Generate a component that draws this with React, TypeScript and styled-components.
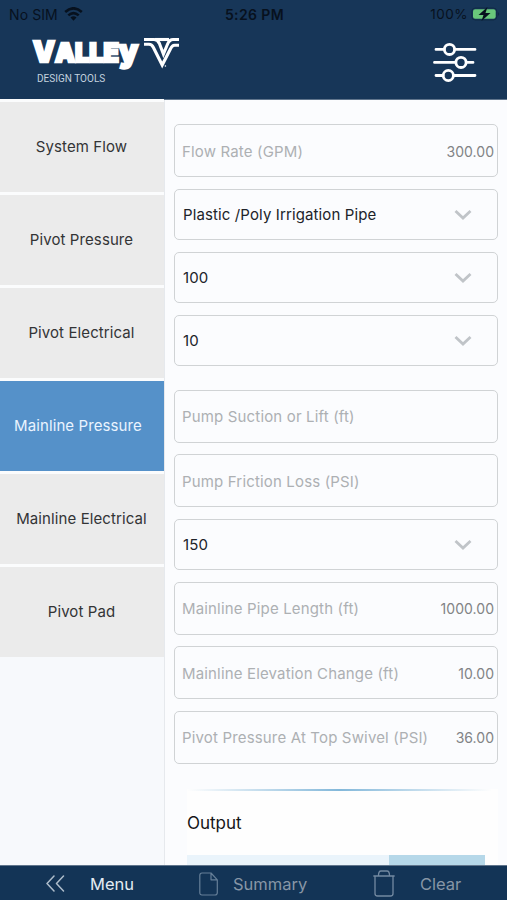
import React from "react";
import styled, { createGlobalStyle } from "styled-components";

const Global = createGlobalStyle`
  * { box-sizing: border-box; }
  body { margin: 0; font-family: Inter, "Liberation Sans", sans-serif; background: #fbfcfe; }
`;

const Screen = styled.div`
  width: 507px;
  height: 900px;
  display: flex;
  flex-direction: column;
  overflow: hidden;
  background: #fbfcfe;
`;

const Header = styled.header`
  height: 100px;
  flex: none;
  background: #173658;
  border-bottom: 1px solid #60758c;
`;

const StatusBar = styled.div`
  height: 28px;
  display: grid;
  grid-template-columns: 1fr auto 1fr;
  align-items: center;
  padding: 0 7px 0 9px;
  font-size: 13px;
  color: #07111e;
`;

const StatusGroup = styled.div<{ $end?: boolean }>`
  display: flex;
  align-items: center;
  justify-content: ${(p) => (p.$end ? "flex-end" : "flex-start")};
  gap: ${(p) => (p.$end ? 3 : 6)}px;
  font-size: ${(p) => (p.$end ? 13.5 : 14)}px;
  letter-spacing: ${(p) => (p.$end ? 0.5 : 0.1)}px;
`;

const Clock = styled.div`
  font-size: 14px;
  font-weight: 600;
  letter-spacing: 0.4px;
`;

const Brand = styled.div`
  display: flex;
  justify-content: space-between;
  padding: 8px 30px 0 31px;
`;

const BrandName = styled.div`
  display: flex;
  flex-direction: column;
`;

const Tagline = styled.div`
  margin: 0 0 0 6px;
  font: 10px/13px Roboto, sans-serif;
  letter-spacing: 0.02px;
  color: #c3d2df;
`;

const SlidersWrap = styled.div`
  padding-top: 6px;
`;

const Body = styled.div`
  flex: 1;
  min-height: 0;
  display: flex;
`;

const Sidebar = styled.nav`
  width: 165px;
  flex: none;
  display: flex;
  flex-direction: column;
  gap: 3px;
  padding: 2px 0 0;
  background: #f7f9fc;
  border-right: 1px solid #e6e9ed;
`;

const Tab = styled.div<{ $active?: boolean }>`
  height: 90px;
  display: flex;
  align-items: center;
  justify-content: center;
  font-size: 15px;
  letter-spacing: 0.1px;
  box-shadow: 0 0 0 3px #fbfcfd;
  clip-path: inset(-3px 0 0 0);
  padding: 0 ${(p) => (p.$active ? 8 : 1)}px 1px 0;
  color: ${(p) => (p.$active ? "#eaf4ff" : "#333436")};
  background: ${(p) => (p.$active ? "#5591c9" : "#ebebeb")};
`;

const Form = styled.main`
  flex: 1;
  padding: 24px 9px 0;
  overflow: hidden;
`;

const Box = styled.div<{ $select?: boolean; $gap?: number }>`
  height: ${(p) => (p.$select ? 51.5 : 53)}px;
  margin-bottom: ${(p) => p.$gap ?? 11.5}px;
  display: flex;
  align-items: center;
  justify-content: space-between;
  padding: 1px ${(p) => (p.$select ? 25 : 3)}px 0 ${(p) => (p.$select ? 8 : 7)}px;
  border: 1.5px solid #d0d3d5;
  border-radius: 5px;
  background: #fbfcfe;
  font-size: 15px;
  letter-spacing: 0.12px;
  color: #202329;
`;

const Placeholder = styled.span`
  letter-spacing: 0.16px;
  color: #adb0b3;
`;

const Value = styled.span`
  font-size: 14px;
  letter-spacing: 0.03px;
  color: #818385;
`;

const Output = styled.section`
  margin: 25px 0 0 13px;
  height: 120px;
  background: #fefefe;
`;

const Divider = styled.div`
  height: 2px;
  margin: 0 6px 0 0;
  background: linear-gradient(90deg, #fefefe, #83b8da 50%, #fefefe);
`;

const OutputTitle = styled.h2`
  height: 64px;
  margin: 0;
  display: flex;
  align-items: center;
  font-size: 17px;
  font-weight: 400;
  color: #151617;
`;

const OutputRow = styled.div`
  width: 298px;
  height: 30px;
  display: grid;
  grid-template-columns: 202px 96px;
`;

const Cell = styled.div<{ $value?: boolean }>`
  background: ${(p) => (p.$value ? "#b6d8e9" : "#eaf4fb")};
`;

const Footer = styled.footer`
  height: 35px;
  flex: none;
  display: grid;
  grid-template-columns: 199px 174px 1fr;
  align-items: center;
  border-top: 1px solid #60758c;
  padding-top: 1px;
  background: #133456;
`;

const Action = styled.div<{ $active?: boolean; $indent?: number; $gap: number }>`
  display: flex;
  align-items: center;
  gap: ${(p) => p.$gap}px;
  padding-left: ${(p) => p.$indent ?? 0}px;
  font-size: 16.5px;
  color: ${(p) => (p.$active ? "#e3ebf2" : "#8796a6")};
`;

const Logo = () => (
  <svg width="150" height="36" viewBox="0 0 150 36" overflow="visible">
    <text
      x="2" y="25.6" fill="#fff" stroke="#fff" strokeWidth="2.4" strokeLinejoin="miter"
      fontFamily="Inter" fontWeight="900" textLength="105" lengthAdjust="spacingAndGlyphs"
    >
      <tspan fontSize="28.5">V</tspan>
      <tspan fontSize="26">ALLE</tspan>
      <tspan fontSize="31">y</tspan>
    </text>
    <g fill="none" stroke="#fff" strokeWidth="3.1">
      <path d="M113 3.5H123Q126.6 3.5 128.4 7.5L132.4 18L136.6 8Q138.5 3.5 142 3.5H148" />
      <path d="M113 8.2H118Q120.8 8.2 122.4 11.5L131.2 29L139.4 13Q141 9.2 143.5 9.2H148" />
      <path d="M124 3.5H138" />
    </g>
    <circle cx="134.4" cy="30" r=".8" fill="#fff" />
  </svg>
);

const Sliders = () => (
  <svg width="44" height="42" viewBox="0 0 44 42" fill="none" stroke="#fff" strokeWidth="2.8" strokeLinecap="round">
    <path d="M3 7.4H11M22 7.4H42M1.5 20.4H22.5M33.5 20.4H40M3 33.5H10M21 33.5H42" />
    <circle cx="16.5" cy="7.4" r="5.1" />
    <circle cx="28" cy="20.4" r="5.1" />
    <circle cx="15.3" cy="33.5" r="5.1" />
  </svg>
);

const Wifi = () => (
  <svg width="19" height="15" viewBox="0 0 19 15" fill="none" stroke="#07111e" strokeWidth="2.6">
    <path d="M1.2 5Q9.5-2.4 17.8 5M4.3 8.4Q9.5 3.8 14.7 8.4" />
    <path d="M6.5 10.5Q9.5 8 12.5 10.5L9.5 13.8Z" fill="#07111e" stroke="none" />
  </svg>
);

const Battery = () => (
  <svg width="29" height="14" viewBox="0 0 29 14">
    <rect x=".8" y="1" width="25" height="12" rx="3.5" fill="none" stroke="#102a45" />
    <rect x="2" y="2.3" width="22.7" height="9.5" rx="2.2" fill="#69c87b" />
    <path d="M27 5Q29.5 7 27 9Z" fill="#102a45" />
    <path d="M16.5 0L7.5 8H12.5L10.5 14L19.5 6H14.5Z" fill="#07111e" />
  </svg>
);

const Chevron = () => (
  <svg width="18" height="12" viewBox="0 0 18 12" fill="none" stroke="#c0c4c8" strokeWidth="2.8">
    <path d="M1.5 2L9 9L16.5 2" />
  </svg>
);

const Back = () => (
  <svg width="19" height="17" viewBox="0 0 19 17" fill="none" stroke="#aebdcb" strokeWidth="1.5" strokeLinecap="round" strokeLinejoin="round">
    <path d="M8 1L1 8.5L8 16M17.5 1L10.5 8.5L17.5 16" />
  </svg>
);

const FileIcon = () => (
  <svg width="19" height="24" viewBox="0 0 19 24" fill="none" stroke="#667f98" strokeWidth="1.2" strokeLinejoin="round">
    <path d="M3 1H12L18.3 7.8V20.5Q18.3 23 16 23H3Q.8 23 .8 20.5V3.5Q.8 1 3 1ZM12 1V7.8H18.3" />
  </svg>
);

const Trash = () => (
  <svg width="22" height="27" viewBox="0 0 22 27" fill="none" stroke="#7389a1" strokeWidth="1.3" strokeLinecap="round" strokeLinejoin="round">
    <path d="M.8 6H21.2M2 6V23.5Q2 26 4.5 26H17.5Q20 26 20 23.5V6M5.5 5.5Q5.5 1 8 1H14Q16.5 1 16.5 5.5" />
  </svg>
);

const tabs = ["System Flow", "Pivot Pressure", "Pivot Electrical", "Mainline Pressure", "Mainline Electrical", "Pivot Pad"];

type FieldProps = { label: string; value?: string; gap?: number };

const Input = ({ label, value, gap }: FieldProps) => (
  <Box $gap={gap}>
    <Placeholder>{label}</Placeholder>
    {value && <Value>{value}</Value>}
  </Box>
);

const Select = ({ label, gap }: FieldProps) => (
  <Box $select $gap={gap}>
    <span>{label}</span>
    <Chevron />
  </Box>
);

export default function App() {
  return (
    <Screen>
      <Global />
      <Header>
        <StatusBar>
          <StatusGroup>No SIM <Wifi /></StatusGroup>
          <Clock>5:26 PM</Clock>
          <StatusGroup $end>100% <Battery /></StatusGroup>
        </StatusBar>
        <Brand>
          <BrandName>
            <Logo />
            <Tagline>DESIGN TOOLS</Tagline>
          </BrandName>
          <SlidersWrap><Sliders /></SlidersWrap>
        </Brand>
      </Header>
      <Body>
        <Sidebar>
          {tabs.map((t) => <Tab key={t} $active={t === "Mainline Pressure"}>{t}</Tab>)}
        </Sidebar>
        <Form>
          <Input label="Flow Rate (GPM)" value="300.00" />
          <Select label="Plastic /Poly Irrigation Pipe" />
          <Select label="100" />
          <Select label="10" gap={23.5} />
          <Input label="Pump Suction or Lift (ft)" />
          <Input label="Pump Friction Loss (PSI)" />
          <Select label="150" />
          <Input label="Mainline Pipe Length (ft)" value="1000.00" />
          <Input label="Mainline Elevation Change (ft)" value="10.00" />
          <Input label="Pivot Pressure At Top Swivel (PSI)" value="36.00" />
          <Output>
            <Divider />
            <OutputTitle>Output</OutputTitle>
            <OutputRow>
              <Cell />
              <Cell $value />
            </OutputRow>
          </Output>
        </Form>
      </Body>
      <Footer>
        <Action $active $indent={46} $gap={25}><Back />Menu</Action>
        <Action $gap={15}><FileIcon />Summary</Action>
        <Action $gap={25}><Trash />Clear</Action>
      </Footer>
    </Screen>
  );
}
